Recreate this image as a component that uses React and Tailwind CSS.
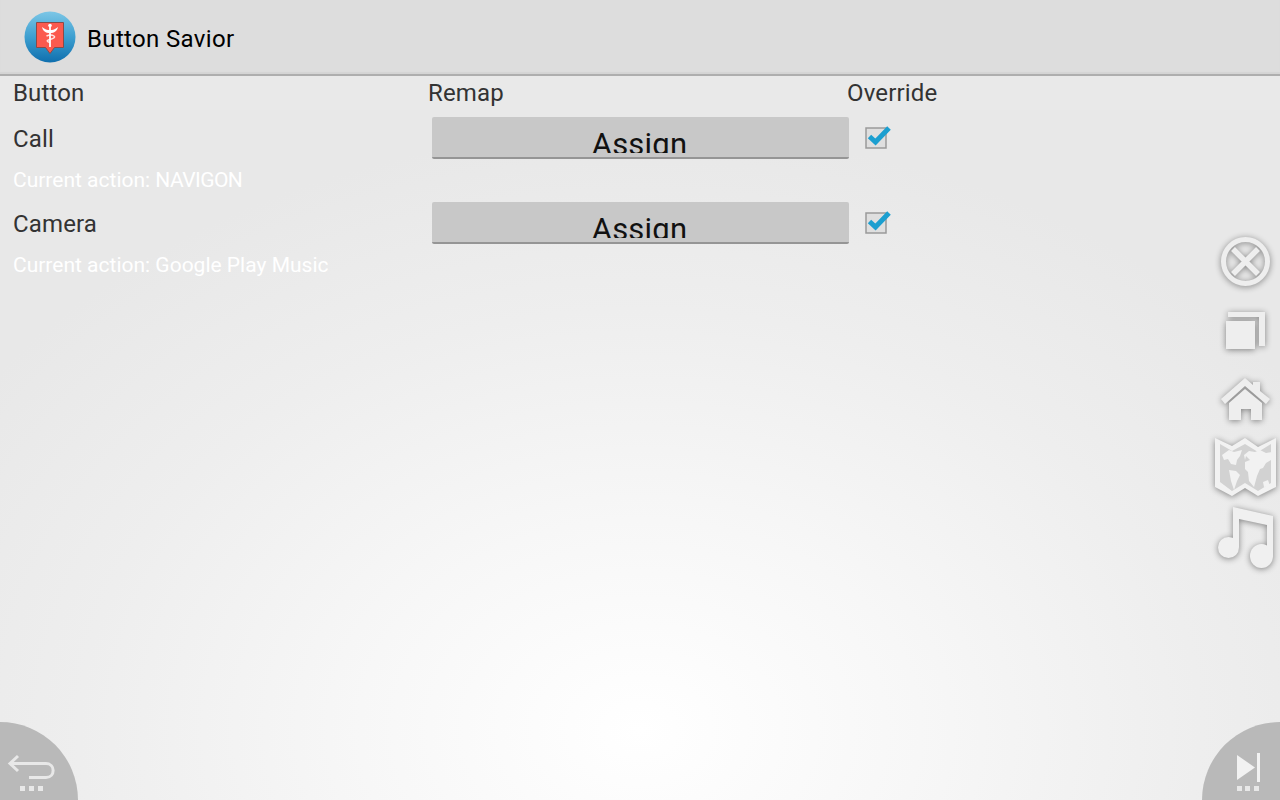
// App.jsx
const rows = [
    { name: 'Call', target: 'NAVIGON', targetClass: 'tracking-[-0.55px]' },
    { name: 'Camera', target: 'Google Play Music', targetClass: '' },
];

function AppLogo() {
    return (
        <svg width="52" height="52" viewBox="0 0 52 52">
            <defs>
                <linearGradient id="logoBg" x1="0" y1="0" x2="0" y2="1">
                    <stop offset="0" stopColor="#7cc6e6" />
                    <stop offset="0.5" stopColor="#3d9fd0" />
                    <stop offset="1" stopColor="#0f6fae" />
                </linearGradient>
            </defs>
            <circle cx="26" cy="26" r="25.5" fill="url(#logoBg)" />
            <path d="M12.5 11.500h27v25h-9l-4.500 6-4.500-6h-9z" fill="#fb5a4e" stroke="#8a4a48" strokeWidth="1" />
            <path d="M26 14v22" stroke="#fff" strokeWidth="1.800" />
            <path d="M18 16c3 2.500 5 3 8 3s5-.5 8-3c-1 4-3.500 6-8 6s-7-2-8-6z" fill="#fff" />
            <path d="M22.500 25c3-1.500 6-1 7.500 0s0 2.500-4 3.500-3.500 2 0 3" fill="none" stroke="#fff" strokeWidth="1.500" opacity="0.85" />
            <circle cx="26" cy="14.500" r="1.800" fill="#fff" />
        </svg>
    );
}

function CheckMark() {
    return (
        <svg width="28" height="30" viewBox="0 0 28 30" className="shrink-0">
            <rect x="2" y="8" width="20" height="20" fill="#dfdfdf" stroke="#9a9a9a" strokeWidth="1.500" />
            <path d="M5.500 16.500l6 5.500L25 8" fill="none" stroke="#1b9fd0" strokeWidth="5" />
        </svg>
    );
}

function SideIcons() {
    return (
        <div className="absolute top-[236px] right-0 w-[68px] h-[336px] drop-shadow-[0_1px_3px_rgba(0,0,0,0.45)]">
            <svg width="68" height="336" viewBox="0 0 68 336">
                {/* close */}
                <circle cx="33.500" cy="25.500" r="22" fill="none" stroke="#eeeeee" strokeWidth="5" />
                <path d="M21 13l25 25M46 13L21 38" stroke="#eeeeee" strokeWidth="5.500" />
                {/* recents */}
                <path d="M16 76h37v34h-6V81H16z" fill="#eeeeee" />
                <rect x="14" y="85" width="29" height="28" fill="#eeeeee" />
                {/* home */}
                <path d="M33 142l8 7v-3h7v9l10 8-4 5-21-18-20 18-4-5z" fill="#eeeeee" />
                <path d="M17 167l16-14 17 14v17H39v-11H29v11H17z" fill="#eeeeee" />
                {/* map */}
                <path d="M3 202l17 8 13-8 13 9 18-9v49l-18 9-13-8-13 8-17-9z" fill="#f2f2f2" />
                <path d="M8 208l12 7 13-7 13 8 13-8v39l-13 8-13-8-13 8-12-9z" fill="#d2d2d2" />
                <path d="M10 219l7-5 5 2 8-2-2 6-3 4-1 5-5-1-3-5-4 1zM17 234l7 1 4 4-3 6-3 9-3-9zM32 219l5-4 6 1 5-2 6 3 6-1-1 8-5 3-3 5-3 1-3 7-3 11-5-6-1-9-3-3 0-7 5-2-4-4-1 4zM51 246l5-2 2 6-6 1z" fill="#f2f2f2" />
                {/* music */}
                <path d="M21 271l40 9v40h-6v-31l-28-6v28h-6z" fill="#f0f0f0" />
                <ellipse cx="16.500" cy="311.500" rx="10.500" ry="10.500" fill="#f0f0f0" />
                <ellipse cx="49.500" cy="320" rx="11.500" ry="12" fill="#f0f0f0" />
            </svg>
        </div>
    );
}

export default function App() {
    return (
        <div className="relative w-[1280px] h-[800px] overflow-hidden flex flex-col bg-[radial-gradient(ellipse_800px_600px_at_640px_730px,#ffffff_0%,#f7f7f7_35%,#eeeeee_70%,#e8e8e8_100%)] font-['Roboto',sans-serif] text-[#333333]">
            <header className="h-[76px] shrink-0 flex items-center pl-6 gap-3 bg-[#dddddd] border-b-2 border-[#aeaeae] shadow-[inset_0_-2px_1px_rgba(0,0,0,0.04)]">
                <AppLogo />
                <span className="text-[24px] tracking-[0.35px] text-black -ml-[1px] mt-[4px]">Button Savior</span>
            </header>

            <div className="flex h-[34px] items-center pl-[13px] text-[24px] tracking-[0.15px] bg-[#e9e9e9]">
                <span className="w-[415px]">Button</span>
                <span className="w-[419px]">Remap</span>
                <span>Override</span>
            </div>

            {rows.map((row) => (
                <div key={row.name} className="flex h-[85px] pl-[13px]">
                    <div className="w-[419px] pt-[13px]">
                        <div className="text-[24px] tracking-[0.15px] leading-[32px]">{row.name}</div>
                        <div className="text-[21px] leading-[28px] mt-[11px] text-white">
                            Current action: <span className={row.targetClass}>{row.target}</span>
                        </div>
                    </div>
                    <div className="w-[417px] h-[42px] mt-[7px] bg-[#c8c8c8] border-b-2 border-[#959595] rounded-[2px] text-center text-[31px] tracking-[0.2px] pr-[2px] text-[#111111]">
                        <div className="h-[36px] leading-[56px] overflow-hidden">Assign</div>
                    </div>
                    <div className="ml-[15px] mt-[10px]">
                        <CheckMark />
                    </div>
                </div>
            ))}

            <SideIcons />

            {/* corner buttons */}
            <div className="absolute left-[-78px] top-[722px] w-[156px] h-[156px] rounded-full bg-[#b9b9b9]" />
            <svg className="absolute left-0 top-[750px]" width="60" height="50" viewBox="0 0 60 50">
                <path d="M18 6l-8 7.500 8 7.500M10 13.500h36c9.500 0 9.500 14 0 14H29" fill="none" stroke="#e8e8e8" strokeWidth="3" />
                <rect x="20" y="36" width="5" height="5" fill="#e8e8e8" />
                <rect x="29" y="36" width="5" height="5" fill="#e8e8e8" />
                <rect x="38" y="36" width="5" height="5" fill="#e8e8e8" />
            </svg>
            <div className="absolute left-[1202px] top-[722px] w-[156px] h-[156px] rounded-full bg-[#b9b9b9]" />
            <svg className="absolute left-[1230px] top-[750px]" width="40" height="50" viewBox="0 0 40 50">
                <path d="M7 5l18 12.500L7 30z" fill="#f2f2f2" />
                <rect x="27" y="3" width="3" height="29" fill="#f2f2f2" />
                <rect x="7" y="36" width="5" height="5" fill="#e8e8e8" />
                <rect x="15" y="36" width="5" height="5" fill="#e8e8e8" />
                <rect x="24" y="36" width="5" height="5" fill="#e8e8e8" />
            </svg>
        </div>
    );
}
